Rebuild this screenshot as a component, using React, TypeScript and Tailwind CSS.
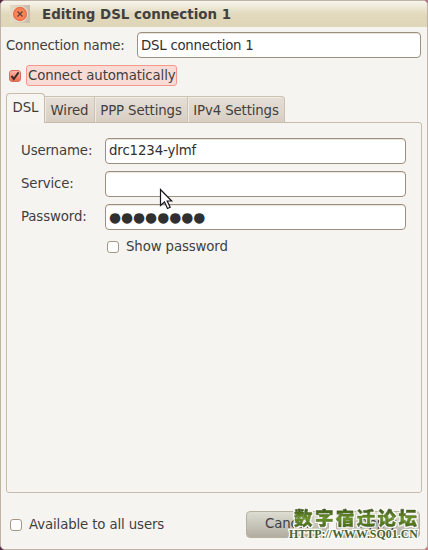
import type { ReactNode } from 'react';

const entry =
  'h-[26px] rounded-[4px] border border-[#9d8f7d] bg-white px-[3px] leading-[23px] whitespace-pre text-[#303030] shadow-[inset_0_1px_0_#e9e6e1]';

function Check({ checked = false }: { checked?: boolean }) {
  return (
    <span
      className={`flex size-3 shrink-0 items-center justify-center rounded-[3px] border ${
        checked
          ? 'border-[#d9705c] bg-gradient-to-b from-[#ffb7a5] to-[#f26b51]'
          : 'border-[#a49988] bg-white'
      }`}
    >
      {checked && (
        <svg width="10" height="10" viewBox="0 0 10 10" className="shrink-0">
          <path d="M1.5 4.8 3.8 8 8.6 1.4" fill="none" stroke="#35302e" strokeWidth="2" />
        </svg>
      )}
    </span>
  );
}

function Tab({ children, width }: { children: ReactNode; width: string }) {
  return (
    <div
      className={`${width} h-[26px] border border-l-0 border-b-0 border-[#cec2b3] bg-gradient-to-b from-[#e6dfd7] to-[#d8cec3] pt-[4px] text-center leading-[20px] whitespace-nowrap shadow-[inset_1px_1px_0_#eeeae4] last:rounded-tr-[4px]`}
    >
      {children}
    </div>
  );
}

function Field({ label, children }: { label: string; children?: ReactNode }) {
  return (
    <div className="flex h-[26px] items-center">
      <span className="w-[84px] leading-[22px]">{label}</span>
      <div className={`${entry} w-[301px]`}>{children}</div>
    </div>
  );
}

export default function App() {
  return (
    <div className="relative h-[550px] w-[428px] overflow-hidden bg-[#552849] font-['DejaVu_Sans',sans-serif] text-[13.33px] tracking-[-0.13px] text-[#3f3f3f]">
      <span className="absolute top-0 right-0 size-2 bg-[#b96d8b]" />
      <span className="absolute right-0 bottom-0 size-2 bg-[#cb747c]" />
      <div className="relative flex h-[550px] flex-col overflow-hidden rounded-[5px] border border-[#c0b3a5] bg-[#f6f4f0]">
        <header className="flex h-[26px] shrink-0 items-center bg-gradient-to-b from-[#f8f5ed] via-[#e2d9bd] via-50% to-[#dfd5b7] pl-[9px]">
          <svg width="20" height="18" viewBox="0 0 20 18">
            <defs>
              <linearGradient id="plate">
                <stop stopColor="#e5dcc6" />
                <stop offset="1" stopColor="#c6bca9" />
              </linearGradient>
              <radialGradient id="ball">
                <stop stopColor="#ff9162" />
                <stop offset=".7" stopColor="#fa8054" />
                <stop offset="1" stopColor="#dc6c46" />
              </radialGradient>
            </defs>
            <path d="M0 0h20v18H0z" fill="url(#plate)" />
            <circle cx="10" cy="9" r="8" fill="#eee0d0" />
            <circle cx="10" cy="9" r="7.2" fill="url(#ball)" />
            <path d="m7.5 6.5 5 5m0-5-5 5" stroke="#624038" strokeWidth="1.4" />
          </svg>
          <span className="mt-[2px] ml-3 text-[13.4px] leading-[20px] font-bold tracking-normal whitespace-nowrap text-[#404040]">
            Editing DSL connection 1
          </span>
        </header>
        <div className="mt-[5px] flex h-[26px] shrink-0 items-center pl-[5px]">
          <span className="w-[131px] pt-px leading-[22px] tracking-[-0.22px] whitespace-nowrap">Connection name:</span>
          <div className={`${entry} w-[284px] leading-[25px] tracking-[-0.25px]`}>DSL connection 1</div>
        </div>
        <div className="mt-[7px] flex h-[21px] shrink-0 items-center pl-2">
          <Check checked />
          <span className="ml-[5px] h-[21px] w-[151px] rounded-[3px] border border-[#f8988a] bg-[#f8dbd5] pl-px leading-[19px] whitespace-nowrap">
            Connect automatically
          </span>
        </div>
        <div className="relative z-10 mt-[6px] flex h-[30px] shrink-0 items-end pl-[5px]">
          <div className="-mb-px h-[30px] w-[39px] rounded-t-[4px] border border-b-0 border-[#c8bbaa] bg-[#f7f5f1] pt-[4px] text-center leading-[20px]">
            DSL
          </div>
          <Tab width="w-[50px]">Wired</Tab>
          <Tab width="w-[93px]">PPP Settings</Tab>
          <Tab width="w-[97px]">IPv4 Settings</Tab>
        </div>
        <main className="ml-[5px] flex h-[371px] w-[416px] shrink-0 flex-col gap-[7px] rounded-[3px] rounded-tl-none border border-[#c8bbaa] pt-[15px] pl-[14px]">
          <Field label="Username:">drc1234-ylmf</Field>
          <Field label="Service:" />
          <Field label="Password:">
            <span className="text-[13.8px] leading-[24px] tracking-normal">●●●●●●●●</span>
          </Field>
          <div className="-mt-[2px] flex h-[24px] items-center pl-[86px]">
            <Check />
            <span className="ml-[7px] leading-[20px]">Show password</span>
          </div>
        </main>
        <footer className="mt-[18px] flex h-[27px] items-center pl-[9px]">
          <Check />
          <span className="ml-[7px] w-[217px] leading-[20px]">Available to all users</span>
          <div className="h-[27px] w-[83px] rounded-[4px] border border-[#b5b0a0] bg-gradient-to-b from-[#deddd3] to-[#b1aea0] pl-[18px] leading-[24px]">
            Cancel
          </div>
          <div className="ml-[7px] h-[27px] w-[84px] rounded-[4px] border border-[#b5b0a0] bg-gradient-to-b from-[#deddd3] to-[#b1aea0] text-center leading-[24px]">
            Apply
          </div>
        </footer>
      </div>
      <svg className="absolute top-[188px] left-[159px]" width="15" height="24" viewBox="0 0 15 24">
        <path d="M1.5 1.5v16l4-3.5 3 6.5 2.7-1.3-3-6.2h4.5z" fill="white" stroke="#15151b" strokeWidth="1.2" />
      </svg>
      <svg className="absolute top-[504px] left-[284px] tracking-normal" width="142" height="42" viewBox="0 0 142 42">
        <defs>
          <linearGradient id="leaf" x2="0" y2="1">
            <stop offset=".2" stopColor="#3d5812" />
            <stop offset=".55" stopColor="#6b9228" />
            <stop offset=".85" stopColor="#486b16" />
          </linearGradient>
          <filter id="halo" x="-10%" y="-30%" width="120%" height="160%">
            <feMorphology in="SourceAlpha" operator="dilate" radius="1" result="wide" />
            <feFlood floodColor="#fcfcf6" />
            <feComposite in2="wide" operator="in" />
            <feMerge>
              <feMergeNode />
              <feMergeNode in="SourceGraphic" />
            </feMerge>
          </filter>
        </defs>
        <g strokeLinejoin="round">
          <text
            x="10"
            y="21"
            textLength="123"
            className="font-['Noto_Sans_CJK_SC',sans-serif] text-[18.5px] font-black"
            fill="url(#leaf)"
            stroke="url(#leaf)"
            strokeWidth=".7"
            filter="url(#halo)"
          >
            数字宿迁论坛
          </text>
          <text
            x="5"
            y="34.3"
            textLength="129"
            lengthAdjust="spacingAndGlyphs"
            className="font-['Liberation_Serif',serif] text-[12px] font-bold [paint-order:stroke]"
            fill="#4a6235"
            stroke="#fcfcf6"
            strokeWidth="2.5"
          >
            HTTP://WWW.SQ01.CN
          </text>
        </g>
      </svg>
    </div>
  );
}
